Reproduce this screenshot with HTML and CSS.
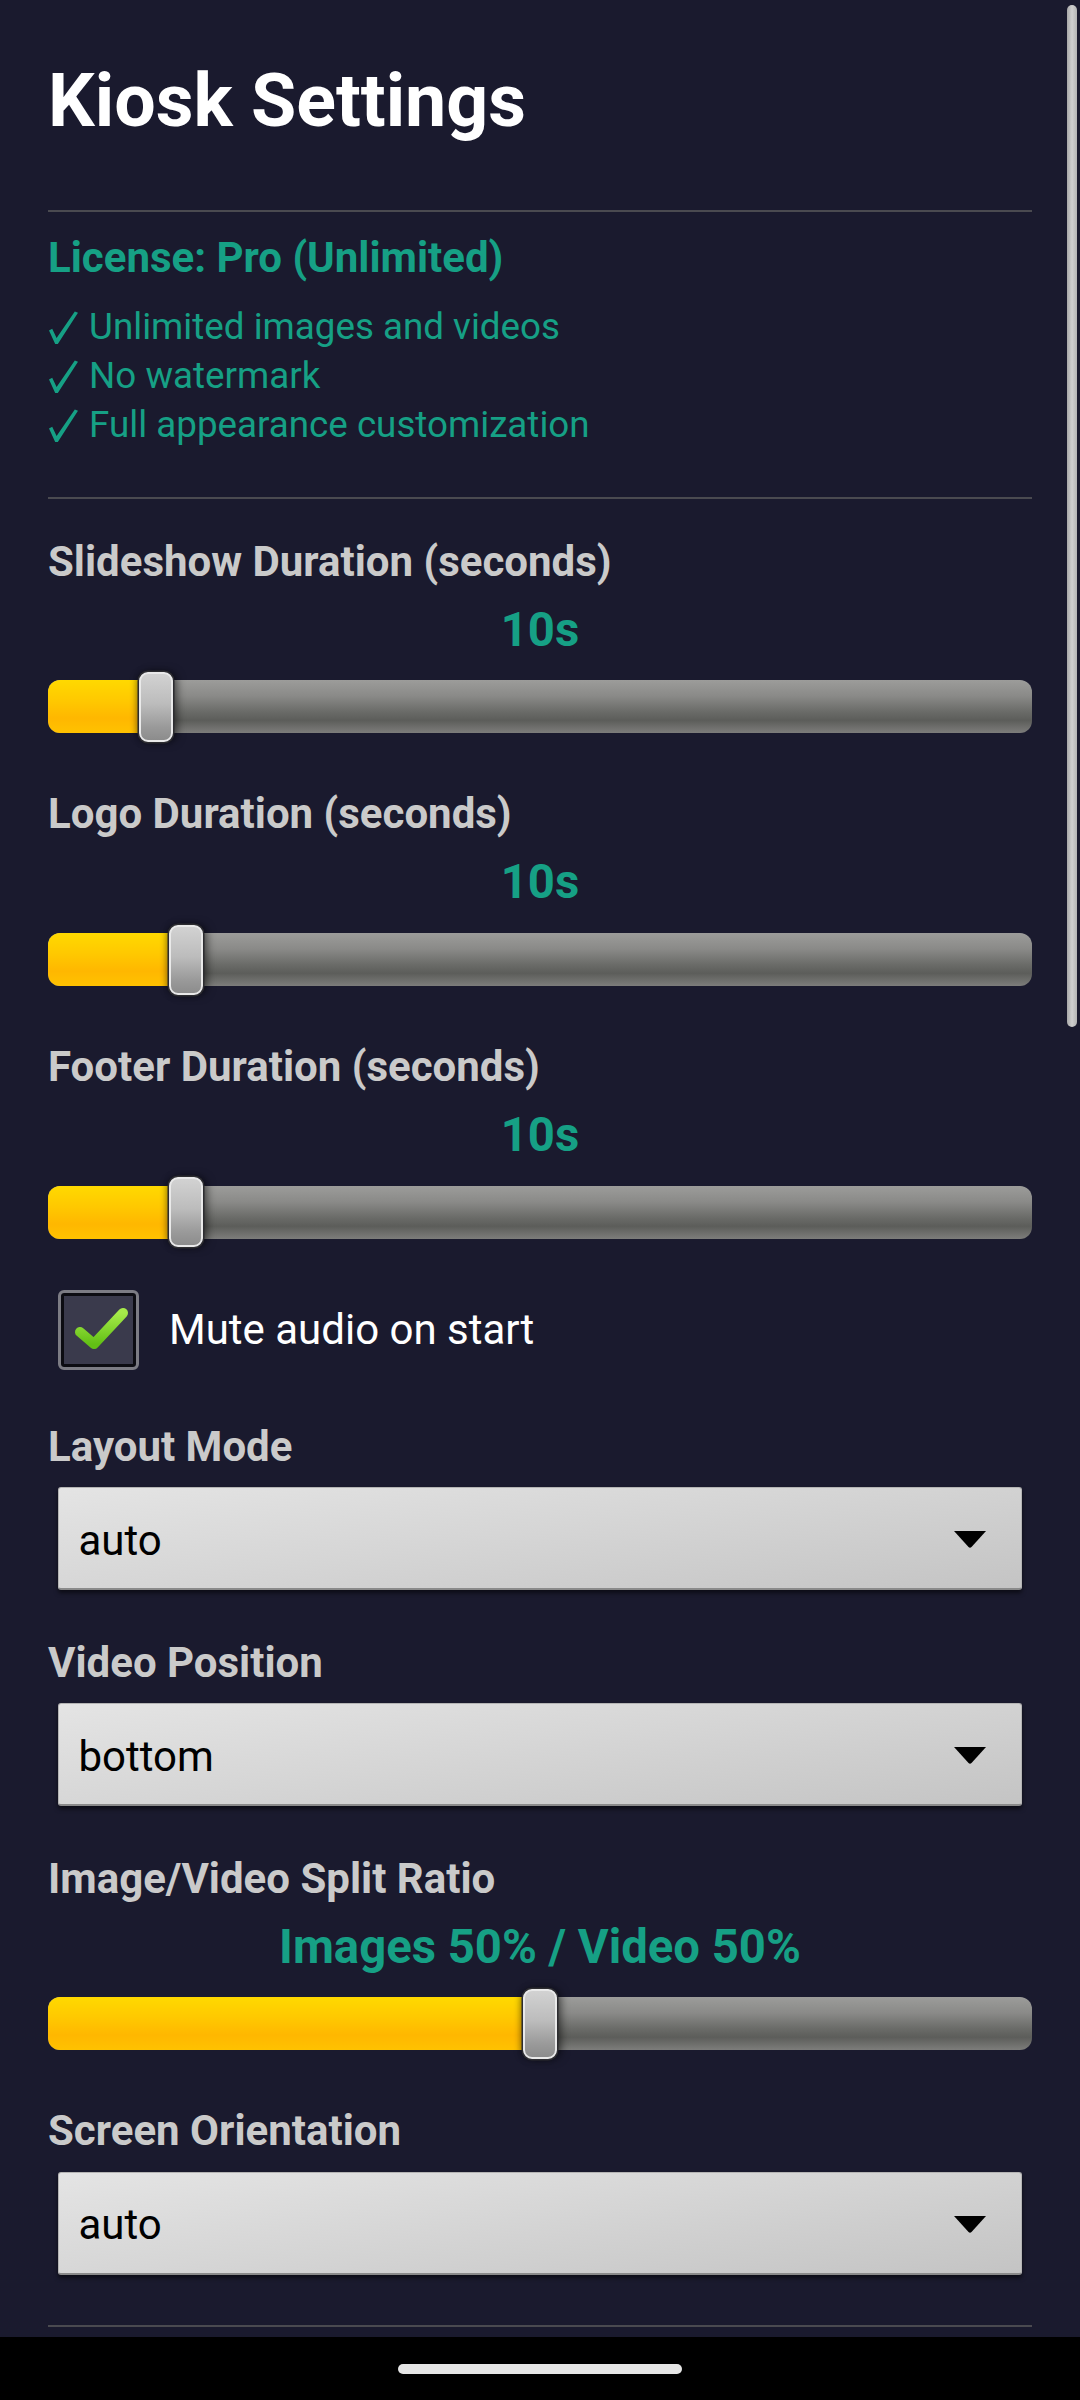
FILE: index.html
```html
<!DOCTYPE html>
<html lang="en">
<head>
<meta charset="utf-8">
<title>Kiosk Settings</title>
<link rel="stylesheet" href="styles.css">
</head>
<body>
<div class="page">
  <h1 class="title">Kiosk Settings</h1>
  <hr class="rule rule-top">
  <section class="license">
    <div class="license-title">License: Pro (Unlimited)</div>
    <ul class="features">
      <li><svg class="tick" viewBox="0 0 30 34" width="30" height="34" aria-hidden="true"><path d="M1 19.5 L4.2 17.8 L8.6 27 L26.8 0.6 L30 1.8 L9.8 33 L7.2 33 Z" fill="#16a085"/></svg> Unlimited images and videos</li>
      <li><svg class="tick" viewBox="0 0 30 34" width="30" height="34" aria-hidden="true"><path d="M1 19.5 L4.2 17.8 L8.6 27 L26.8 0.6 L30 1.8 L9.8 33 L7.2 33 Z" fill="#16a085"/></svg> No watermark</li>
      <li><svg class="tick" viewBox="0 0 30 34" width="30" height="34" aria-hidden="true"><path d="M1 19.5 L4.2 17.8 L8.6 27 L26.8 0.6 L30 1.8 L9.8 33 L7.2 33 Z" fill="#16a085"/></svg> Full appearance customization</li>
    </ul>
  </section>
  <hr class="rule rule-mid">

  <div class="field field-first">
    <div class="label">Slideshow Duration (seconds)</div>
    <div class="value">10s</div>
    <div class="slider" style="--v:0.096">
      <div class="track"><div class="fill"></div></div>
      <div class="thumb"></div>
    </div>
  </div>

  <div class="field">
    <div class="label">Logo Duration (seconds)</div>
    <div class="value">10s</div>
    <div class="slider" style="--v:0.1275">
      <div class="track"><div class="fill"></div></div>
      <div class="thumb"></div>
    </div>
  </div>

  <div class="field">
    <div class="label">Footer Duration (seconds)</div>
    <div class="value">10s</div>
    <div class="slider" style="--v:0.1275">
      <div class="track"><div class="fill"></div></div>
      <div class="thumb"></div>
    </div>
  </div>

  <label class="check-row">
    <span class="checkbox">
      <svg class="check-icon" viewBox="0 0 74 74" width="74" height="74">
        <defs>
          <linearGradient id="cg" x1="0" y1="0" x2="0" y2="1">
            <stop offset="0" stop-color="#a6ea4a"/>
            <stop offset="1" stop-color="#62c015"/>
          </linearGradient>
        </defs>
        <polyline points="18,39 32,51 61,20" fill="none" stroke="url(#cg)" stroke-width="10" stroke-linecap="round" stroke-linejoin="round"/>
      </svg>
    </span>
    <span class="check-text">Mute audio on start</span>
  </label>

  <div class="field field-after-check">
    <div class="label">Layout Mode</div>
    <div class="select">
      <span class="select-text">auto</span>
      <svg class="arrow" viewBox="0 0 32 17" width="32" height="17"><path d="M0 0 H32 L17.5 16 Q16 17.3 14.5 16 Z" fill="#000"/></svg>
    </div>
  </div>

  <div class="field">
    <div class="label">Video Position</div>
    <div class="select">
      <span class="select-text">bottom</span>
      <svg class="arrow" viewBox="0 0 32 17" width="32" height="17"><path d="M0 0 H32 L17.5 16 Q16 17.3 14.5 16 Z" fill="#000"/></svg>
    </div>
  </div>

  <div class="field">
    <div class="label">Image/Video Split Ratio</div>
    <div class="value">Images 50% / Video 50%</div>
    <div class="slider" style="--v:0.5">
      <div class="track"><div class="fill"></div></div>
      <div class="thumb"></div>
    </div>
  </div>

  <div class="field">
    <div class="label">Screen Orientation</div>
    <div class="select">
      <span class="select-text">auto</span>
      <svg class="arrow" viewBox="0 0 32 17" width="32" height="17"><path d="M0 0 H32 L17.5 16 Q16 17.3 14.5 16 Z" fill="#000"/></svg>
    </div>
  </div>

  <hr class="rule rule-bottom">
</div>

<div class="scrollbar"></div>
<div class="navbar"><div class="pill"></div></div>
</body>
</html>
```

FILE: styles.css
```css
html, body {
  margin: 0;
  padding: 0;
  overflow: hidden;
}
body {
  background: #1a1a2e;
  font-family: Roboto, "DejaVu Sans", sans-serif;
  color: #ffffff;
  height: 2400px;
}
.page {
  padding: 57px 48px 0 48px;
  display: flex;
  flex-direction: column;
}
.title {
  margin: 0;
  font-size: 73.5px;
  line-height: 88px;
  font-weight: 700;
  color: #ffffff;
}
.rule {
  border: 0;
  height: 2px;
  background: #4a4a50;
  margin: 0;
}
.rule-top { margin-top: 65px; }
.rule-mid { margin-top: 48px; }
.rule-bottom { margin-top: 50px; }

.license-title {
  margin-top: 21px;
  font-size: 42px;
  line-height: 50px;
  font-weight: 700;
  color: #16a085;
}
.features {
  list-style: none;
  margin: 19px 0 0 0;
  padding: 0;
  font-size: 36.75px;
  line-height: 49px;
  color: #16a085;
}
.tick {
  display: inline-block;
  vertical-align: -6px;
  margin-right: 2px;
}

.field {
  display: flex;
  flex-direction: column;
  margin-top: 47.3px;
}
.field-first { margin-top: 37.6px; }
.field-after-check { margin-top: 51.6px; }

.label {
  font-size: 42px;
  line-height: 50px;
  font-weight: 700;
  color: #cacaca;
}
.value {
  margin-top: 15px;
  font-size: 47.25px;
  line-height: 56px;
  font-weight: 700;
  color: #16a085;
  text-align: center;
}

.slider {
  position: relative;
  margin-top: 14.4px;
  height: 70px;
  display: flex;
  align-items: center;
}
.track {
  flex: 1;
  height: 53px;
  border-radius: 12px;
  overflow: hidden;
  background: linear-gradient(to bottom, #9c9c9a 0%, #8a8a88 30%, #6a6b68 60%, #5c5d5a 76%, #7d7d7b 100%);
}
.fill {
  height: 100%;
  width: calc(var(--v) * (100% - 34px) + 17px);
  background: linear-gradient(to bottom, #ffd900 0%, #ffc800 40%, #ffb700 72%, #ffc200 100%);
}
.thumb {
  position: absolute;
  top: 0;
  left: calc(var(--v) * (100% - 34px));
  width: 34px;
  height: 70px;
  box-sizing: border-box;
  border-radius: 9px;
  border: 2px solid #e9e9e9;
  background: linear-gradient(to bottom, #d2d2d2 0%, #bcbcbc 45%, #9a9a9a 80%, #8c8c8c 100%);
  box-shadow: 0 0 0 1.5px #2c2c30, 4px 0 8px rgba(0, 0, 0, 0.55), -3px 0 6px rgba(0, 0, 0, 0.35);
}

.check-row {
  display: flex;
  align-items: center;
  margin-top: 43px;
}
.checkbox {
  margin-left: 10px;
  width: 81px;
  height: 80px;
  box-sizing: border-box;
  border: 3px solid #7c7c84;
  border-radius: 6px;
  display: flex;
  align-items: center;
  justify-content: center;
  background: #3a3a4c;
  box-shadow: inset 0 0 0 3px #0c0c12;
}
.check-icon {
  display: block;
}
.check-text {
  margin-left: 30px;
  font-size: 42px;
  line-height: 50px;
  color: #ffffff;
}

.select {
  margin: 15.5px 10px 0 9.5px;
  height: 103px;
  box-sizing: border-box;
  display: flex;
  align-items: center;
  justify-content: space-between;
  padding: 0 35px 0 20px;
  border-radius: 3px;
  border: 1px solid #b4b4b4;
  border-bottom: 2px solid #8a8a8a;
  background: linear-gradient(172deg, #e4e4e4 0%, #d6d6d6 45%, #c4c4c4 100%);
  box-shadow: 0 3px 4px rgba(0, 0, 0, 0.55);
}
.select-text {
  margin-top: 5px;
  font-size: 42px;
  line-height: 50px;
  color: #000000;
}
.arrow {
  display: block;
  margin-top: 3px;
}

.scrollbar {
  position: fixed;
  top: 5px;
  right: 3px;
  width: 10px;
  height: 1022px;
  border-radius: 5px;
  background: linear-gradient(to right, #a9a9a9, #cfcfcf 50%, #b4b4b4);
}
.navbar {
  position: fixed;
  left: 0;
  right: 0;
  bottom: 0;
  height: 63px;
  background: #000000;
  display: flex;
  justify-content: center;
}
.pill {
  margin-top: 27px;
  width: 284px;
  height: 10px;
  border-radius: 5px;
  background: #e6e6e6;
}
```
